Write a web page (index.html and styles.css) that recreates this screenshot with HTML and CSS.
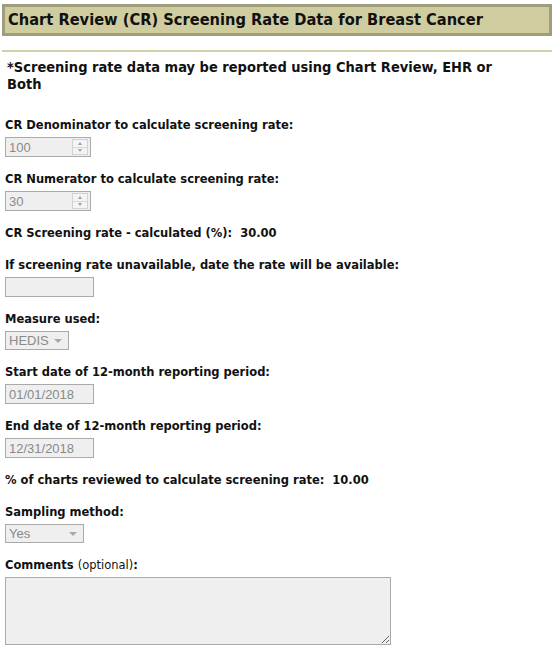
FILE: index.html
```html
<!DOCTYPE html>
<html>
<head>
<meta charset="utf-8">
<link rel="stylesheet" href="styles.css">
</head>
<body>
<div class="page">
  <h1 class="title">Chart Review (CR) Screening Rate Data for Breast Cancer</h1>
  <hr class="rule">
  <p class="note">*Screening rate data may be reported using Chart Review, EHR or Both</p>

  <div class="field">
    <div class="label">CR Denominator to calculate screening rate:</div>
    <div class="box num"><span class="val">100</span><span class="spin"><span class="sb up"></span><span class="sb down"></span></span></div>
  </div>

  <div class="field">
    <div class="label">CR Numerator to calculate screening rate:</div>
    <div class="box num"><span class="val">30</span><span class="spin"><span class="sb up"></span><span class="sb down"></span></span></div>
  </div>

  <div class="field text-row">
    <div class="label">CR Screening rate - calculated (%):&nbsp; 30.00</div>
  </div>

  <div class="field">
    <div class="label">If screening rate unavailable, date the rate will be available:</div>
    <div class="box date"></div>
  </div>

  <div class="field">
    <div class="label">Measure used:</div>
    <div class="box sel sel-hedis"><span class="val">HEDIS</span><span class="caret"></span></div>
  </div>

  <div class="field">
    <div class="label">Start date of 12-month reporting period:</div>
    <div class="box date"><span class="val">01/01/2018</span></div>
  </div>

  <div class="field">
    <div class="label">End date of 12-month reporting period:</div>
    <div class="box date"><span class="val">12/31/2018</span></div>
  </div>

  <div class="field text-row">
    <div class="label">% of charts reviewed to calculate screening rate:&nbsp; 10.00</div>
  </div>

  <div class="field">
    <div class="label">Sampling method:</div>
    <div class="box sel sel-yes"><span class="val">Yes</span><span class="caret"></span></div>
  </div>

  <div class="field">
    <div class="label">Comments <span class="opt">(optional)</span>:</div>
    <textarea class="comments" disabled></textarea>
  </div>
</div>
</body>
</html>
```

FILE: styles.css
```css
html, body {
  margin: 0;
  padding: 0;
  background: #ffffff;
}
body {
  font-family: "DejaVu Sans", Verdana, sans-serif;
  color: #000;
}
.page {
  padding: 4px 3px 0 2px;
}
.title {
  margin: 0;
  height: 26px;
  box-sizing: content-box;
  border: 3px solid #9f9d7b;
  background: #cfcd9f;
  font-family: "DejaVu Sans Condensed", "DejaVu Sans", sans-serif;
  font-size: 16.3px;
  font-weight: bold;
  line-height: 26px;
  padding: 0 0 0 3px;
  color: #111;
}
.rule {
  margin: 14px 0 0 0;
  border: 0;
  height: 2px;
  background: #d2d0a5;
}
.note {
  margin: 7px 0 0 0;
  padding-left: 5px;
  max-width: 505px;
  font-family: "DejaVu Sans Condensed", "DejaVu Sans", sans-serif;
  font-size: 14.5px;
  font-weight: bold;
  line-height: 17px;
  color: #111;
}
.field {
  margin: 0 0 14px 3px;
}
.note + .field {
  margin-top: 24px;
}
.text-row {
  margin-bottom: 16px;
}
.label {
  font-size: 11.5px;
  font-weight: bold;
  line-height: 16px;
  margin-bottom: 4px;
  color: #111;
}
.text-row .label {
  margin-bottom: 0;
}
.opt {
  font-weight: normal;
}
.box {
  box-sizing: border-box;
  border: 1px solid #aaaaaa;
  background: #efefef;
  display: flex;
  align-items: center;
  font-family: "Liberation Sans", Arial, sans-serif;
  font-size: 13px;
  color: #8a8a8a;
  padding-left: 3px;
}
.num {
  width: 86px;
  height: 20px;
  justify-content: space-between;
}
.spin {
  display: flex;
  flex-direction: column;
  width: 16px;
  height: 16px;
  margin-right: 2px;
  border: 1px solid #d2d2d2;
  box-sizing: border-box;
  background: #f4f4f4;
}
.sb {
  flex: 1;
  position: relative;
}
.sb.up {
  border-bottom: 1px solid #d6d6d6;
}
.sb::after {
  content: "";
  position: absolute;
  left: 5px;
  top: 2px;
  border-left: 2px solid transparent;
  border-right: 2px solid transparent;
}
.sb.up::after {
  border-bottom: 3px solid #a0a0a0;
}
.sb.down::after {
  top: 1px;
  border-top: 3px solid #a0a0a0;
}
.date {
  width: 89px;
  height: 20px;
}
.sel {
  height: 19px;
  justify-content: space-between;
}
.sel-hedis {
  width: 64px;
}
.sel-yes {
  width: 79px;
}
.caret {
  width: 0;
  height: 0;
  margin-right: 6px;
  border-left: 4px solid transparent;
  border-right: 4px solid transparent;
  border-top: 4px solid #a8a8a8;
}
.comments {
  display: block;
  box-sizing: border-box;
  width: 386px;
  height: 68px;
  margin: 0;
  border: 1px solid #aaaaaa;
  background: #efefef;
}
```
